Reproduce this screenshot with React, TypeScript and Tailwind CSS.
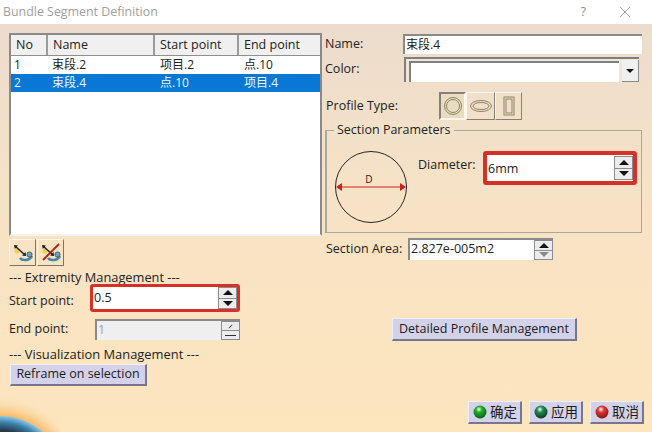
import type { ReactNode } from "react";

const FONT = "font-['Open_Sans','Noto_Sans_CJK_SC',sans-serif]";

// Raised gray-blue CATIA push button
function PushButton({ children, className = "" }: { children: ReactNode; className?: string }) {
  return (
    <div
      className={`flex items-center justify-center bg-[#d3d2e8] text-[#1c1c1c] border-t border-l border-t-[#eeeef8] border-l-[#eeeef8] border-b-2 border-r-2 border-b-[#77758f] border-r-[#77758f] ${className}`}
    >
      {children}
    </div>
  );
}

// Small up / down spinner next to a field
function Spinner({ disabled = false, hollow = false }: { disabled?: boolean; hollow?: boolean }) {
  return (
    <div className="w-[19px] h-full shrink-0 flex flex-col gap-px bg-[#8c8c8c] p-px">
      <div className="flex-1 bg-[#ececec] flex items-center justify-center">
        {disabled ? (
          <div className="w-[5px] h-px bg-[#444] -rotate-45" />
        ) : (
          <div className="w-0 h-0 border-x-[5px] border-x-transparent border-b-[5px] border-b-[#111]" />
        )}
      </div>
      <div className="flex-1 bg-[#ececec] flex items-center justify-center">
        {disabled ? (
          <div className="w-[11px] h-px bg-[#333]" />
        ) : hollow ? (
          <div className="w-0 h-0 border-x-[5px] border-x-transparent border-t-[5px] border-t-[#8a8a8a]" />
        ) : (
          <div className="w-0 h-0 border-x-[5px] border-x-transparent border-t-[5px] border-t-[#111]" />
        )}
      </div>
    </div>
  );
}

function Ball({ color, shade }: { color: string; shade: string }) {
  return (
    <svg width="16" height="16" viewBox="0 0 16 16" className="shrink-0">
      <defs>
        <radialGradient id={`ball-${color.slice(1)}`} cx="0.42" cy="0.3" r="0.75">
          <stop offset="0" stopColor="#ffffff" />
          <stop offset="0.3" stopColor={color} />
          <stop offset="1" stopColor={shade} />
        </radialGradient>
      </defs>
      <circle cx="8" cy="8" r="6.5" fill={`url(#ball-${color.slice(1)})`} />
    </svg>
  );
}

function LinkIcon({ crossed = false }: { crossed?: boolean }) {
  return (
    <svg width="23" height="21" viewBox="0 0 23 21">
      <circle cx="6" cy="9" r="2.6" fill="#efd24a" />
      <path d="M4 4 L14 13" stroke="#222" strokeWidth="1.5" />
      <path d="M3 3 L7 3.6 L3.8 7 Z M15 14 L14.6 10 L11 13.4 Z" fill="#222" />
      <path d="M9 16 C11 19 18 19 21 14" fill="none" stroke="#4a86a6" strokeWidth="2.6" />
      <circle cx="18.5" cy="12.5" r="2.6" fill="#6ea3bd" stroke="#22465c" strokeWidth="0.7" />
      {crossed && <path d="M4 18 L20 2" stroke="#a8201a" strokeWidth="1.8" />}
    </svg>
  );
}

const ROWS = [
  { no: "1", name: "束段.2", start: "项目.2", end: "点.10", selected: false },
  { no: "2", name: "束段.4", start: "点.10", end: "项目.4", selected: true },
];

const COLUMNS = "grid grid-cols-[37px_107px_84px_1fr]";

export default function App() {
  return (
    <div className={`${FONT} w-[652px] h-[432px] relative overflow-hidden flex flex-col text-[12.5px] text-[#222] bg-white`}>
      {/* Title bar */}
      <div className="h-6 shrink-0 flex items-center bg-white pl-[3px] pr-[21px]">
        <span className="text-[12.4px] text-[#a0a0a0]">Bundle Segment Definition</span>
        <span className="ml-auto text-[12px] text-[#8a8a8a] mr-[33px]">?</span>
        <svg width="12" height="12" viewBox="0 0 12 12">
          <path d="M1 1 L11 11 M11 1 L1 11" stroke="#8a8a8a" strokeWidth="0.8" />
        </svg>
      </div>

      {/* Dialog body */}
      <div className="flex-1 flex flex-col bg-gradient-to-b from-[#ecdccd] via-[#f6e2c6] via-40% to-[#fde5bd] pl-[9px] pr-[10px] pt-[9px]">
        <div className="flex flex-1">
          {/* Left column */}
          <div className="w-[313px] shrink-0 flex flex-col">
            <div className="h-[203px] bg-white border-2 border-t-[#8a8a8a] border-l-[#8a8a8a] border-r-[#8a8a8a] border-b-[#f2f2f2]">
              <div className={`${COLUMNS} h-[21px] bg-[#f0f0f0] border-b border-[#8f8f8f]`}>
                {["No", "Name", "Start point", "End point"].map((h) => (
                  <div key={h} className="pl-[5px] flex items-center border-r-2 border-[#9b9b9b] last:border-r-0 whitespace-nowrap">
                    {h}
                  </div>
                ))}
              </div>
              {ROWS.map((r) => (
                <div
                  key={r.no}
                  className={`${COLUMNS} h-[18px] items-center whitespace-nowrap text-[12px] ${r.selected ? "bg-[#0878d4] text-[#eef6fc]" : "text-[#222]"}`}
                >
                  <div className="pl-[3px]">{r.no}</div>
                  <div className="pl-[4px]">{r.name}</div>
                  <div className="pl-[5px]">{r.start}</div>
                  <div className="pl-[5px]">{r.end}</div>
                </div>
              ))}
            </div>

            <div className="flex gap-px mt-[3px]">
              <div className="w-[27px] h-[27px] flex items-center justify-center border border-t-[#fff6e6] border-l-[#fff6e6] border-b-[#7d7468] border-r-[#7d7468]">
                <LinkIcon />
              </div>
              <div className="w-[27px] h-[27px] flex items-center justify-center border border-t-[#fff6e6] border-l-[#fff6e6] border-b-[#7d7468] border-r-[#7d7468]">
                <LinkIcon crossed />
              </div>
            </div>

            <div className="mt-[3px] h-[16px] leading-[16px] whitespace-nowrap text-[12.8px]">--- Extremity Management ---</div>

            <div className="flex items-center h-[28px] -mt-[1px]">
              <span className="w-[81px] shrink-0 mt-[6px]">Start point:</span>
              <div className="w-[150px] h-[28px] flex border-[3px] border-[#d6302b] rounded-[3px] bg-white">
                <div className="flex-1 pl-[1px] leading-[22px] text-[#222]">0.5</div>
                <Spinner />
              </div>
            </div>

            <div className="flex items-center mt-[7px] h-[21px]">
              <span className="w-[86px] shrink-0">End point:</span>
              <div className="w-[145px] h-[21px] flex bg-[#efefef] border-l-2 border-t-2 border-[#8a8a8a]">
                <div className="flex-1 pl-[1px] text-[#a0a0a0] leading-[18px]">1</div>
                <Spinner disabled />
              </div>
            </div>

            <div className="mt-[6px] h-[16px] leading-[16px] whitespace-nowrap text-[12.9px]">--- Visualization Management ---</div>

            <PushButton className="w-[137px] h-[22px] mt-[2px] ml-[1px]">Reframe on selection</PushButton>
          </div>

          {/* Right column */}
          <div className="flex-1 flex flex-col pl-[3px]">
            <div className="flex items-center h-[20px] mt-px">
              <span className="w-[78px] shrink-0">Name:</span>
              <div className="flex-1 h-[20px] bg-white border-l-2 border-t-2 border-[#8a8a8a] pl-[1px] leading-[17px] text-[12px]">束段.4</div>
            </div>

            <div className="flex items-center h-[25px] mt-[3px]">
              <span className="w-[79px] shrink-0">Color:</span>
              <div className="w-[235px] h-[25px] flex border-l-2 border-t-2 border-[#7f7f7f] bg-[#f2e6d6]">
                <div className="flex-1 m-[3px] mt-[2px] mb-0 bg-white border-l-2 border-t-2 border-[#7f7f7f]" />
                <div className="w-[17px] mt-[1px] bg-[#f0f0f0] border-r border-b border-[#8a8a8a] flex items-center justify-center">
                  <div className="w-0 h-0 border-x-[4px] border-x-transparent border-t-[4px] border-t-[#111]" />
                </div>
              </div>
            </div>

            <div className="flex items-center h-[28px] mt-[10px]">
              <span className="w-[114px] shrink-0 pl-px">Profile Type:</span>
              <div className="w-[27px] h-[28px] flex items-center justify-center bg-[#eadcc2] border-2 border-t-[#85807a] border-l-[#85807a] border-b-[#fff8ea] border-r-[#fff8ea]">
                <svg width="20" height="20" viewBox="0 0 20 20">
                  <circle cx="10" cy="10" r="8.5" fill="none" stroke="#8a8666" />
                  <circle cx="10" cy="10" r="6.5" fill="none" stroke="#8a8666" />
                </svg>
              </div>
              <div className="w-[29px] h-[28px] flex items-center justify-center border border-t-[#fff8ea] border-l-[#fff8ea] border-b-[#85807a] border-r-[#85807a]">
                <svg width="24" height="14" viewBox="0 0 24 14">
                  <ellipse cx="12" cy="7" rx="10.5" ry="5.5" fill="none" stroke="#8a8666" />
                  <ellipse cx="12" cy="7" rx="8" ry="3.5" fill="none" stroke="#8a8666" />
                </svg>
              </div>
              <div className="w-[27px] h-[28px] flex items-center justify-center border border-t-[#fff8ea] border-l-[#fff8ea] border-b-[#85807a] border-r-[#85807a]">
                <svg width="12" height="20" viewBox="0 0 12 20">
                  <rect x="1" y="1" width="10" height="18" fill="none" stroke="#8a8666" />
                  <rect x="3" y="3" width="6" height="14" fill="none" stroke="#8a8666" />
                </svg>
              </div>
            </div>

            {/* Section Parameters group */}
            <div className="relative h-[103px] mt-[10px] border border-[#a8a8a0] border-l-2 flex">
              <span className="absolute -top-[9px] left-[7px] px-[3px] bg-[#f3e2ca] leading-[16px]">Section Parameters</span>
              <svg width="74" height="74" viewBox="0 0 74 74" className="ml-[7px] mt-[19px] shrink-0">
                <circle cx="37" cy="37" r="35.5" fill="none" stroke="#111" strokeWidth="0.9" />
                <path d="M6 37 H68" stroke="#cf2020" strokeWidth="1.2" />
                <path d="M2 37 L8 33 L8 41 Z M72 37 L66 33 L66 41 Z" fill="#cf2020" />
                <text x="35" y="33" fontSize="10" textAnchor="middle" fill="#222" fontFamily="Open Sans">D</text>
              </svg>
              <span className="w-[56px] ml-[10px] mt-[26px] shrink-0 leading-[16px]">Diameter:</span>
              <div className="ml-[9px] mt-[20px] w-[154px] shrink-0 h-[34px] flex border-[4px] border-[#d6302b] rounded-[3px] bg-white">
                <div className="flex-1 pl-[1px] leading-[27px] text-[#222]">6mm</div>
                <div className="py-[1px]">
                  <Spinner />
                </div>
              </div>
            </div>

            <div className="flex items-center h-[22px] mt-[5px]">
              <span className="w-[83px] shrink-0 pl-px">Section Area:</span>
              <div className="w-[145px] h-[22px] flex bg-white border-l-2 border-t-2 border-[#8a8a8a]">
                <div className="flex-1 pl-px leading-[17px]">2.827e-005m2</div>
                <Spinner hollow />
              </div>
            </div>

            <PushButton className="w-[185px] h-[23px] mt-[58px] ml-[67px]">Detailed Profile Management</PushButton>

            {/* Dialog buttons */}
            <div className="flex justify-end gap-[7px] mt-[60px] -mr-[2px]">
              <PushButton className="w-[54px] h-[23px] gap-[2px] text-[13.5px]"><Ball color="#22b02a" shade="#0a5a10" />确定</PushButton>
              <PushButton className="w-[54px] h-[23px] gap-[2px] text-[13.5px]"><Ball color="#1f8f58" shade="#0d2d22" />应用</PushButton>
              <PushButton className="w-[54px] h-[23px] gap-[2px] text-[13.5px]"><Ball color="#e03a3a" shade="#7a1010" />取消</PushButton>
            </div>
          </div>
        </div>
      </div>

      {/* Globe peeking from the corner of the window */}
      <div className="absolute left-0 bottom-0 w-[60px] h-[40px] overflow-hidden pointer-events-none">
        <svg width="60" height="40" viewBox="0 0 60 40">
          <defs>
            <radialGradient id="glow" gradientUnits="userSpaceOnUse" cx="0" cy="90" r="86">
              <stop offset="0.76" stopColor="#f7b25a" stopOpacity="0.9" />
              <stop offset="1" stopColor="#fde5bd" stopOpacity="0" />
            </radialGradient>
            <radialGradient id="globe" gradientUnits="userSpaceOnUse" cx="0" cy="90" r="66">
              <stop offset="0.78" stopColor="#27384a" />
              <stop offset="0.9" stopColor="#3a7da4" />
              <stop offset="1" stopColor="#8ac8e6" />
            </radialGradient>
          </defs>
          <circle cx="0" cy="90" r="86" fill="url(#glow)" />
          <circle cx="0" cy="90" r="66" fill="url(#globe)" />
        </svg>
      </div>
    </div>
  );
}
